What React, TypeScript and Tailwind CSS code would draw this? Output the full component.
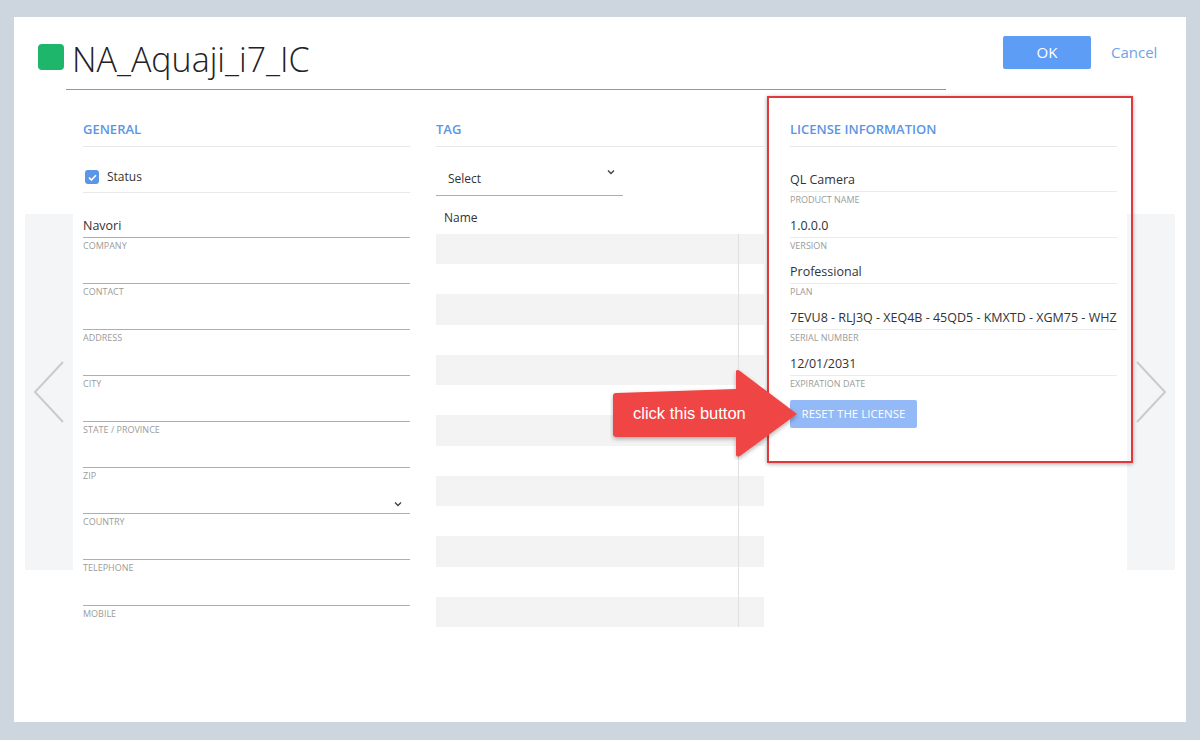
import React from "react";

const GENERAL_FIELDS = [
  { value: "Navori", label: "Company" },
  { value: "", label: "Contact" },
  { value: "", label: "Address" },
  { value: "", label: "City" },
  { value: "", label: "State / Province" },
  { value: "", label: "Zip" },
  { value: "", label: "Country", select: true },
  { value: "", label: "Telephone" },
  { value: "", label: "Mobile" },
];

const LICENSE_FIELDS = [
  { value: "QL Camera", label: "Product name" },
  { value: "1.0.0.0", label: "Version" },
  { value: "Professional", label: "Plan" },
  { value: "7EVU8 - RLJ3Q - XEQ4B - 45QD5 - KMXTD - XGM75 - WHZ6", label: "Serial number" },
  { value: "12/01/2031", label: "Expiration date" },
];

function SmallChevron() {
  return (
    <svg width="8" height="6" viewBox="0 0 8 6" className="shrink-0">
      <path d="M1 1.5 L4 4.5 L7 1.5" fill="none" stroke="#444" strokeWidth="1.4" />
    </svg>
  );
}

function Field({
  value,
  label,
  blue,
  select,
}: {
  value: string;
  label: string;
  blue?: boolean;
  select?: boolean;
}) {
  return (
    <div>
      <div className="flex h-[33px] items-end justify-between overflow-hidden whitespace-nowrap pb-[2px] text-[12.5px] leading-[18px] text-[#333]">
        <span>{value}</span>
        {select && (
          <span className="mb-[4px] mr-[8px]">
            <SmallChevron />
          </span>
        )}
      </div>
      <div className={blue ? "h-px bg-[#8db2ec]" : "h-px bg-[#ebebeb]"} />
      <div className="h-[12px] pt-[3px] text-[9px] uppercase leading-[9px] text-[#9b9b9b]">
        {label}
      </div>
    </div>
  );
}

function SectionTitle({ children }: { children: React.ReactNode }) {
  return (
    <div>
      <div className="flex h-[33px] items-center text-[13px] font-semibold text-[#5b95e6]">
        {children}
      </div>
      <div className="h-px bg-[#e8e8e8]" />
    </div>
  );
}

function SideStrip({ dir }: { dir: "left" | "right" }) {
  return (
    <div className="mt-[101px] flex h-[356px] w-[48px] shrink-0 items-center justify-center bg-[#f4f5f7]">
      <svg width="32" height="62" viewBox="0 0 32 62">
        <polyline
          points={dir === "left" ? "30,1 2,31 30,61" : "2,1 30,31 2,61"}
          fill="none"
          stroke="#cbcbcb"
          strokeWidth="2"
        />
      </svg>
    </div>
  );
}

export default function App() {
  return (
    <div
      className="h-[740px] w-[1200px] overflow-hidden bg-[#cdd5de] pl-[14px] pt-[17px]"
      style={{ fontFamily: "'Open Sans', 'Liberation Sans', sans-serif" }}
    >
      <div className="h-[705px] w-[1172px] bg-white">
        {/* header */}
        <div className="flex items-start pl-[24px] pt-[19px]">
          <div className="mt-[8px] h-[26px] w-[26px] shrink-0 rounded-[4px] bg-[#1db66b]" />
          <div className="ml-[2px] w-[880px]">
            <div className="h-[53px] pl-[6px] text-[34px] font-light leading-[46px] text-[#222]">
              NA_Aquaji_i7_IC
            </div>
            <div className="h-px bg-[#6f9ce3]" />
          </div>
          <button className="ml-[57px] h-[33px] w-[88px] rounded-[2px] bg-[#5d9df6] text-[15px] text-white">
            OK
          </button>
          <span className="ml-[20px] flex h-[33px] items-center text-[15px] text-[#6ea3e6]">
            Cancel
          </span>
        </div>

        {/* content */}
        <div className="mt-[23px] flex items-start pl-[11px]">
          <SideStrip dir="left" />

          <div className="flex w-[1054px] shrink-0 pl-[10px]">
            {/* general */}
            <div className="w-[327px] shrink-0">
              <SectionTitle>GENERAL</SectionTitle>
              <div className="flex h-[45px] items-start pl-[2px] pt-[21px]">
                <div className="flex items-center">
                  <span className="flex h-[14px] w-[14px] items-center justify-center rounded-[3px] bg-[#5b95e6]">
                    <svg width="9" height="7" viewBox="0 0 9 7">
                      <path d="M1 3.6 L3.4 6 L8 1.2" fill="none" stroke="white" strokeWidth="1.6" />
                    </svg>
                  </span>
                  <span className="ml-[8px] text-[12px] text-[#333]">Status</span>
                </div>
              </div>
              <div className="h-px bg-[#e8e8e8]" />
              <div className="mt-[11px]">
                {GENERAL_FIELDS.map((f) => (
                  <Field key={f.label} value={f.value} label={f.label} select={f.select} blue />
                ))}
              </div>
            </div>

            {/* tag */}
            <div className="ml-[26px] w-[328px] shrink-0">
              <SectionTitle>TAG</SectionTitle>
              <div className="mt-[13px] w-[187px]">
                <div className="flex h-[35px] items-start justify-between pl-[12px] pr-[8px] pt-[11px]">
                  <span className="text-[12px] leading-[16px] text-[#333]">Select</span>
                  <span className="-mt-[2px]">
                    <SmallChevron />
                  </span>
                </div>
                <div className="h-px bg-[#8db2ec]" />
              </div>
              <div className="h-[38px] pl-[8px] pt-[14px] text-[12px] leading-[16px] text-[#333]">
                Name
              </div>
              <div className="flex h-[393px] flex-col">
                {Array.from({ length: 13 }).map((_, i) => (
                  <div
                    key={i}
                    className={i % 2 === 0 ? "flex flex-1 bg-[#f3f3f3]" : "flex flex-1 bg-white"}
                  >
                    <div className="w-[302px]" />
                    <div className="w-px bg-[#e0e0e0]" />
                    <div className="flex-1" />
                  </div>
                ))}
              </div>
            </div>

            {/* license */}
            <div className="relative ml-[26px] w-[327px] shrink-0">
              <SectionTitle>LICENSE INFORMATION</SectionTitle>
              <div className="mt-[11px]">
                {LICENSE_FIELDS.map((f) => (
                  <Field key={f.label} value={f.value} label={f.label} />
                ))}
              </div>
              <button className="mt-[12px] h-[28px] w-[127px] rounded-[2px] bg-[#93b9f6] text-[11.5px] uppercase text-white">
                Reset the license
              </button>

              {/* annotation: red highlight box */}
              <div className="pointer-events-none absolute left-[-23px] top-[-17px] h-[367px] w-[366px] border-2 border-[#e0393d] shadow-[0_1px_4px_rgba(0,0,0,0.35)]" />

              {/* annotation: arrow */}
              <div className="pointer-events-none absolute left-[-180px] top-[253px] h-[94px] w-[190px]">
                <svg width="190" height="94" viewBox="0 0 190 94" className="absolute inset-0">
                  <defs>
                    <filter id="sh" x="-10%" y="-10%" width="120%" height="130%">
                      <feDropShadow dx="0" dy="2" stdDeviation="2" floodColor="#000" floodOpacity="0.3" />
                    </filter>
                  </defs>
                  <path
                    d="M6 27 L126 23 L126 5 Q127 3 130 5 L187 48 L130 90 Q127 92 126 89 L126 71 L6 71 Q3 71 3 68 L3 30 Q3 27 6 27 Z"
                    fill="#f04545"
                    filter="url(#sh)"
                  />
                </svg>
                <span
                  className="absolute left-[23px] top-[37px] whitespace-nowrap text-[16.5px] leading-[20px] text-white"
                  style={{ fontFamily: "'Liberation Sans', Arial, sans-serif" }}
                >
                  click this button
                </span>
              </div>
            </div>
          </div>

          <SideStrip dir="right" />
        </div>
      </div>
    </div>
  );
}
